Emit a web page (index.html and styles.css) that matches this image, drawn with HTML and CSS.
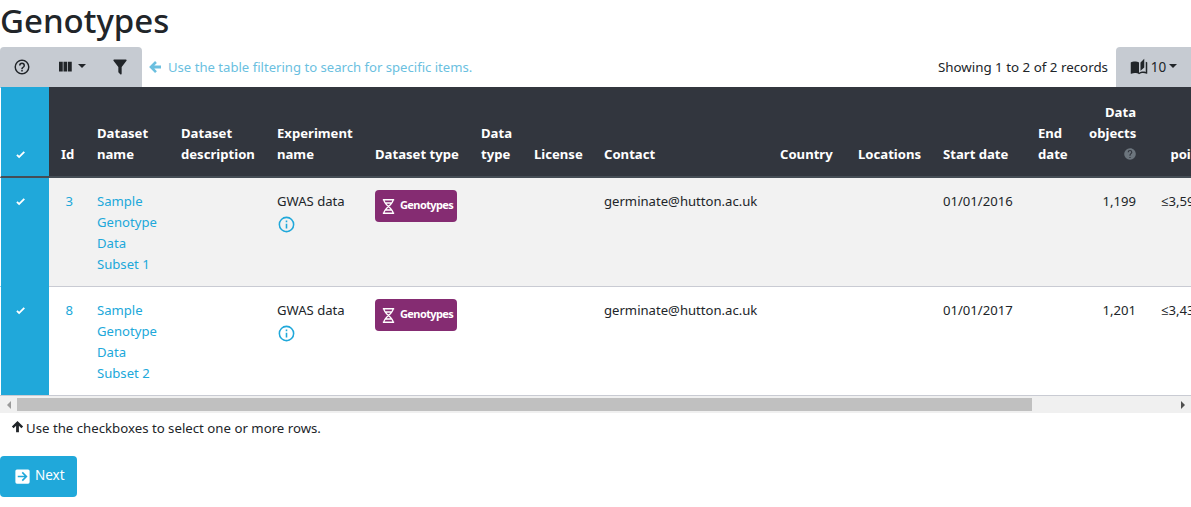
FILE: index.html
```html
<!DOCTYPE html>
<html lang="en">
<head>
<meta charset="utf-8">
<title>Genotypes</title>
<link rel="stylesheet" href="styles.css">
</head>
<body>
<h1 class="title">Genotypes</h1>
<div class="toolbar">
  <div class="tool-group">
    <button class="tool tool-help"><svg class="icon-lg" viewBox="0 0 24 24"><path d="M11,18H13V16H11V18M12,2A10,10 0 0,0 2,12A10,10 0 0,0 12,22A10,10 0 0,0 22,12A10,10 0 0,0 12,2M12,20C7.59,20 4,16.41 4,12C4,7.59 7.59,4 12,4C16.41,4 20,7.59 20,12C20,16.41 16.41,20 12,20M12,6A4,4 0 0,0 8,10H10A2,2 0 0,1 12,8A2,2 0 0,1 14,10C14,12 11,11.75 11,15H13C13,12.75 16,12.5 16,10A4,4 0 0,0 12,6Z"/></svg></button>
    <button class="tool tool-caret"><svg class="icon-lg" viewBox="0 0 24 24"><path d="M16,5V18H21V5M4,18H9V5H4M10,18H15V5H10V18Z"/></svg><span class="caret"></span></button>
    <button class="tool tool-filter"><svg class="icon-filter" viewBox="0 0 24 24"><path d="M14,12V19.88C14.04,20.18 13.94,20.5 13.71,20.71C13.32,21.1 12.69,21.1 12.3,20.71L10.29,18.7C10.06,18.47 9.96,18.16 10,17.87V12H9.97L4.21,4.62C3.87,4.19 3.95,3.56 4.38,3.22C4.57,3.08 4.78,3 5,3V3H19V3C19.22,3 19.43,3.08 19.62,3.22C20.05,3.56 20.13,4.19 19.79,4.62L14.03,12H14Z"/></svg></button>
  </div>
  <div class="filter-hint"><svg class="icon-sm" viewBox="0 0 24 24"><path d="M20,10V14H11L14.5,17.5L12.08,19.92L4.16,12L12.08,4.08L14.5,6.5L11,10H20Z"/></svg><span>Use the table filtering to search for specific items.</span></div>
  <div class="records">Showing 1 to 2 of 2 records</div>
  <button class="per-page"><svg class="icon-lg" viewBox="0 0 24 24"><path d="M19 1L14 6V17L19 12.5V1M21 5V18.5C19.9 18.15 18.7 18 17.5 18C15.8 18 13.35 18.65 12 19.5V6C10.55 4.9 8.45 4.5 6.5 4.5C4.55 4.5 2.45 4.9 1 6V20.65C1 20.9 1.25 21.15 1.5 21.15C1.6 21.15 1.65 21.1 1.75 21.1C3.1 20.45 5.05 20 6.5 20C8.45 20 10.55 20.4 12 21.5C13.35 20.65 15.8 20 17.5 20C19.15 20 20.85 20.3 22.25 21.05C22.35 21.1 22.4 21.1 22.5 21.1C22.75 21.1 23 20.85 23 20.6V6C22.4 5.55 21.75 5.25 21 5Z"/></svg><span>10</span><span class="caret"></span></button>
</div>
<div class="table-wrap">
  <table class="data-table">
    <colgroup>
      <col class="c-check"><col class="c-id"><col class="c-name"><col class="c-desc"><col class="c-exp"><col class="c-type"><col class="c-dtype"><col class="c-lic"><col class="c-contact"><col class="c-country"><col class="c-loc"><col class="c-start"><col class="c-end"><col class="c-objects"><col class="c-points">
    </colgroup>
    <thead>
      <tr>
        <th class="check"><svg class="icon-check" viewBox="0 0 24 24"><path d="M9,20.42L2.79,14.21L5.62,11.38L9,14.77L18.88,4.88L21.71,7.71L9,20.42Z"/></svg></th>
        <th>Id</th><th>Dataset name</th><th>Dataset description</th><th>Experiment name</th><th class="nowrap">Dataset type</th><th>Data type</th><th>License</th><th>Contact</th><th>Country</th><th>Locations</th><th>Start date</th><th>End date</th>
        <th class="num">Data objects<br><svg class="icon-help" viewBox="0 0 24 24"><path d="M15.07,11.25L14.17,12.17C13.45,12.89 13,13.5 13,15H11V14.5C11,13.39 11.45,12.39 12.17,11.67L13.41,10.41C13.78,10.05 14,9.55 14,9C14,7.89 13.1,7 12,7A2,2 0 0,0 10,9H8A4,4 0 0,1 12,5A4,4 0 0,1 16,9C16,9.88 15.64,10.67 15.07,11.25M13,19H11V17H13M12,2A10,10 0 0,0 2,12A10,10 0 0,0 12,22A10,10 0 0,0 22,12C22,6.47 17.5,2 12,2Z"/></svg></th>
        <th class="num">Data<br>points <svg class="icon-help" viewBox="0 0 24 24"><path d="M15.07,11.25L14.17,12.17C13.45,12.89 13,13.5 13,15H11V14.5C11,13.39 11.45,12.39 12.17,11.67L13.41,10.41C13.78,10.05 14,9.55 14,9C14,7.89 13.1,7 12,7A2,2 0 0,0 10,9H8A4,4 0 0,1 12,5A4,4 0 0,1 16,9C16,9.88 15.64,10.67 15.07,11.25M13,19H11V17H13M12,2A10,10 0 0,0 2,12A10,10 0 0,0 12,22A10,10 0 0,0 22,12C22,6.47 17.5,2 12,2Z"/></svg></th>
      </tr>
    </thead>
    <tbody>
      <tr class="odd">
        <td class="check"><svg class="icon-check" viewBox="0 0 24 24"><path d="M9,20.42L2.79,14.21L5.62,11.38L9,14.77L18.88,4.88L21.71,7.71L9,20.42Z"/></svg></td>
        <td class="num"><a href="#">3</a></td>
        <td><a href="#">Sample Genotype Data Subset 1</a></td>
        <td></td>
        <td>GWAS data <svg class="icon-info" viewBox="0 0 24 24"><path d="M11,9H13V7H11M12,20C7.59,20 4,16.41 4,12C4,7.59 7.59,4 12,4C16.41,4 20,7.59 20,12C20,16.41 16.41,20 12,20M12,2A10,10 0 0,0 2,12A10,10 0 0,0 12,22A10,10 0 0,0 22,12A10,10 0 0,0 12,2M11,17H13V11H11V17Z"/></svg></td>
        <td class="badge-cell"><span class="badge"><svg class="icon-dna" viewBox="0 0 24 24"><path d="M4 2.5H20M4 21.5H20M5.5 2.5C5.5 10 18.5 14 18.5 21.5M18.5 2.5C18.5 10 5.5 14 5.5 21.5M7.5 7H16.5M7.5 17H16.5"/></svg><span class="badge-text">Genotypes</span></span></td>
        <td></td><td></td>
        <td>germinate@hutton.ac.uk</td>
        <td></td><td></td>
        <td>01/01/2016</td>
        <td></td>
        <td class="num">1,199</td>
        <td class="num points">≤3,599,000</td>
      </tr>
      <tr>
        <td class="check"><svg class="icon-check" viewBox="0 0 24 24"><path d="M9,20.42L2.79,14.21L5.62,11.38L9,14.77L18.88,4.88L21.71,7.71L9,20.42Z"/></svg></td>
        <td class="num"><a href="#">8</a></td>
        <td><a href="#">Sample Genotype Data Subset 2</a></td>
        <td></td>
        <td>GWAS data <svg class="icon-info" viewBox="0 0 24 24"><path d="M11,9H13V7H11M12,20C7.59,20 4,16.41 4,12C4,7.59 7.59,4 12,4C16.41,4 20,7.59 20,12C20,16.41 16.41,20 12,20M12,2A10,10 0 0,0 2,12A10,10 0 0,0 12,22A10,10 0 0,0 22,12A10,10 0 0,0 12,2M11,17H13V11H11V17Z"/></svg></td>
        <td class="badge-cell"><span class="badge"><svg class="icon-dna" viewBox="0 0 24 24"><path d="M4 2.5H20M4 21.5H20M5.5 2.5C5.5 10 18.5 14 18.5 21.5M18.5 2.5C18.5 10 5.5 14 5.5 21.5M7.5 7H16.5M7.5 17H16.5"/></svg><span class="badge-text">Genotypes</span></span></td>
        <td></td><td></td>
        <td>germinate@hutton.ac.uk</td>
        <td></td><td></td>
        <td>01/01/2017</td>
        <td></td>
        <td class="num">1,201</td>
        <td class="num points">≤3,439,000</td>
      </tr>
    </tbody>
  </table>
</div>
<div class="scrollbar">
  <span class="arrow arrow-left"></span>
  <div class="track"><div class="thumb"></div></div>
  <span class="arrow arrow-right"></span>
</div>
<p class="select-hint"><svg class="icon-up" viewBox="0 0 24 24"><path d="M14,20H10V11L6.5,14.5L4.08,12.08L12,4.16L19.92,12.08L17.5,14.5L14,11V20Z"/></svg>Use the checkboxes to select one or more rows.</p>
<button class="next"><svg class="icon-next" viewBox="0 0 24 24"><path d="M5,21A2,2 0 0,1 3,19V5A2,2 0 0,1 5,3H19A2,2 0 0,1 21,5V19A2,2 0 0,1 19,21H5M6,13H14.5L11,16.5L12.42,17.92L18.34,12L12.42,6.08L11,7.5L14.5,11H6V13Z"/></svg><span class="next-text">Next</span></button>
</body>
</html>
```
FILE: styles.css
```css
* { box-sizing: border-box; }
html, body { margin: 0; padding: 0; }
body {
  font-family: "Noto Sans", "Open Sans", sans-serif;
  font-size: 13.12px;
  line-height: 21px;
  color: #212529;
  background: #fff;
  overflow: hidden;
}
svg { fill: currentColor; display: inline-block; }
button { font: inherit; border: 0; color: #212529; }

.title {
  margin: 0 0 5px;
  font-size: 33px;
  line-height: 42px;
  font-weight: 500;
  color: #212529;
}

.toolbar { display: flex; align-items: center; height: 40px; }
.tool-group {
  display: flex;
  width: 142px;
  height: 40px;
  background: #c6cbd2;
  border-radius: 4px 4px 0 0;
}
.tool {
  background: none;
  padding: 0;
  display: flex;
  align-items: center;
  justify-content: center;
}
.tool-help { width: 44px; }
.tool-caret { width: 54px; gap: 4px; }
.tool-filter { width: 44px; }
.caret {
  width: 0;
  height: 0;
  border-left: 4px solid transparent;
  border-right: 4px solid transparent;
  border-top: 4px solid #212529;
  margin-bottom: 3px;
}
.icon-lg { width: 18px; height: 18px; }
.icon-filter { width: 20px; height: 20px; }
.icon-sm { width: 18px; height: 18px; margin-right: 4px; flex: none; }
.filter-hint {
  display: flex;
  align-items: center;
  margin-left: 4px;
  color: #6bbfdf;
  flex: 1;
}
.records { margin-right: 8px; font-size: 13.35px; }
.per-page {
  width: 75px;
  height: 40px;
  background: #c6cbd2;
  border-radius: 4px 0 0 0;
  display: flex;
  align-items: center;
  justify-content: center;
  gap: 3px;
  padding: 0;
  font-size: 13.5px;
}

.table-wrap {
  overflow: hidden;
  border-bottom: 1px solid #c9cbd3;
}
.data-table {
  table-layout: fixed;
  width: 1240px;
  border-collapse: separate;
  border-spacing: 0;
}
.c-check { width: 49px; }
.c-id { width: 36px; }
.c-name { width: 84px; }
.c-desc { width: 96px; }
.c-exp { width: 98px; }
.c-type { width: 106px; }
.c-dtype { width: 53px; }
.c-lic { width: 70px; }
.c-contact { width: 176px; }
.c-country { width: 78px; }
.c-loc { width: 85px; }
.c-start { width: 95px; }
.c-end { width: 54px; }
.c-objects { width: 68px; }
.c-points { width: 92px; }

.data-table th, .data-table td {
  padding: 13px 12px 11px;
  text-align: left;
  vertical-align: top;
}
.data-table th {
  padding-top: 14px;
  background: #32363e;
  color: #fff;
  font-weight: 700;
  vertical-align: bottom;
  border-top: 1px solid #32363e;
  border-bottom: 2px solid #454d55;
}
.data-table th.nowrap { white-space: nowrap; }
.data-table td { border-bottom: 1px solid #c9cbd3; }
.data-table tbody tr:last-child td { border-bottom: 0; }
.data-table .odd td { background: #f2f2f2; }
.data-table .num { text-align: right; }
.data-table th.num { padding-left: 9px; }
.data-table td.points { white-space: nowrap; }
.data-table td.badge-cell { padding-top: 12px; }
.data-table th.check, .data-table td.check {
  background: #20a8da;
  border-left: 1px solid #fff;
  padding-left: 14px;
  padding-right: 0;
  border-bottom-color: #20a8da;
  color: #fff;
}
.data-table th.check { border-top-color: #20a8da; border-bottom-color: #454d55; }
.icon-check { display: block; width: 11px; height: 11px; }
th .icon-check { margin-bottom: 5px; }
td .icon-check { margin-top: 5px; }

a { color: #20a8da; text-decoration: none; }
.icon-info { width: 19px; height: 19px; color: #20a8da; display: block; margin-top: 3px; }
.icon-help { width: 14px; height: 14px; color: #6c757d; vertical-align: -2px; margin-right: -1px; }

.badge {
  display: inline-flex;
  align-items: center;
  width: 82px;
  height: 32px;
  padding: 0 4px 0 5px;
  background: #852c72;
  border-radius: 4px;
  color: #fff;
  font-size: 11px;
  font-weight: 700;
  letter-spacing: -0.6px;
  white-space: nowrap;
}
.badge-text { margin-top: -3px; }
.icon-dna {
  width: 17px;
  height: 17px;
  margin-right: 3px;
  fill: none;
  stroke: #fff;
  stroke-width: 1.9;
  flex: none;
}

.scrollbar {
  display: flex;
  height: 17px;
  background: #f0f0f0;
}
.arrow { width: 17px; flex: none; display: flex; align-items: center; justify-content: center; }
.arrow::before {
  content: "";
  border-top: 4px solid transparent;
  border-bottom: 4px solid transparent;
}
.arrow-left::before { border-right: 4px solid #9a9a9a; }
.arrow-right::before { border-left: 4px solid #505050; }
.track { flex: 1; }
.thumb { width: 1015px; height: 13px; margin-top: 2px; background: #c0c0c0; }

.select-hint {
  margin: 5px 0 17px;
  padding-left: 9px;
  display: flex;
  align-items: center;
  font-size: 13.22px;
}
.icon-up { width: 17px; height: 17px; margin-top: -4px; }

.next {
  display: flex;
  align-items: center;
  width: 77px;
  height: 41px;
  padding: 0 0 0 13px;
  background: #20a8da;
  color: #fff;
  border-radius: 4px;
  gap: 3px;
  font-size: 13.5px;
}
.next-text { margin-top: -2px; }
.icon-next { width: 19px; height: 19px; }
```
